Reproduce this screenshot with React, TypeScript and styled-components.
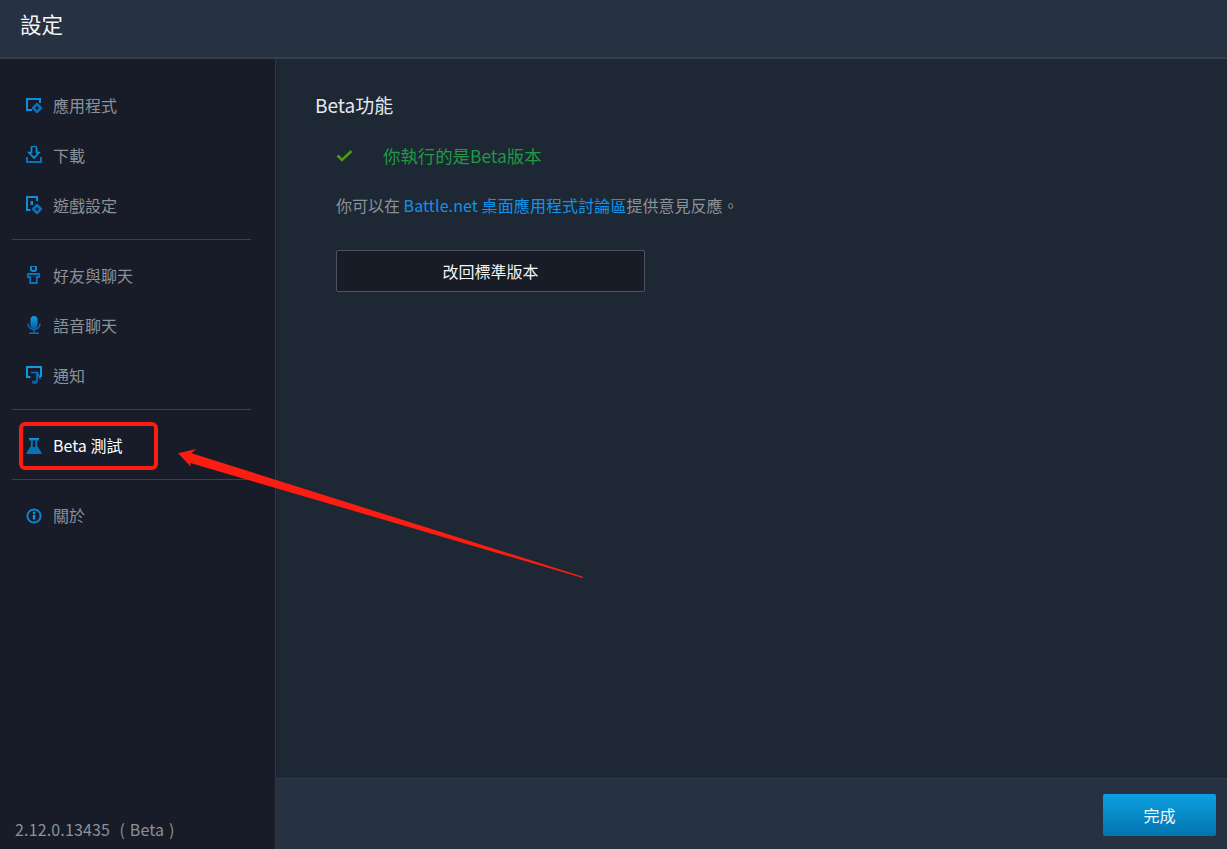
import React from "react";
import styled, { createGlobalStyle } from "styled-components";

const Global = createGlobalStyle`
  html, body { margin: 0; padding: 0; height: 100%; background: #1e2734; overflow: hidden; }
  #root { height: 100%; }
  * { box-sizing: border-box; }
`;

const Shell = styled.div`
  position: relative;
  display: flex;
  flex-direction: column;
  width: 1227px;
  height: 849px;
  font-family: "Noto Sans CJK TC", "Open Sans", sans-serif;
  font-weight: 400;
  overflow: hidden;
`;

const Header = styled.header`
  flex: 0 0 59px;
  display: flex;
  align-items: flex-start;
  padding: 8px 0 0 20px;
  background: #263141;
  border-bottom: 2px solid #333e4e;
`;

const Title = styled.h1`
  margin: 0;
  font-size: 21.5px;
  line-height: 32px;
  font-weight: 400;
  color: #f4f6f8;
`;

const Body = styled.div`
  flex: 1;
  display: flex;
  min-height: 0;
`;

const Sidebar = styled.aside`
  flex: 0 0 276px;
  display: flex;
  flex-direction: column;
  padding: 22px 24px 0 12px;
  background: #171c28;
  border-right: 1px solid #2f3643;
`;

const Group = styled.nav`
  display: flex;
  flex-direction: column;
`;

const Divider = styled.hr`
  width: 239px;
  height: 1px;
  margin: 8px 0 11px;
  border: 0;
  background: #3a404c;
`;

const Row = styled.div<{ $active?: boolean }>`
  display: flex;
  align-items: center;
  height: 50px;
  padding-left: 14px;
  gap: 11px;
  font-size: 16px;
  color: ${(p) => (p.$active ? "#ffffff" : "#8c9198")};
`;

const RowLabel = styled.span`
  padding-bottom: 2px;
`;

const IconBox = styled.span`
  display: flex;
  flex: 0 0 16px;
  width: 16px;
  height: 20px;
`;

const Version = styled.div`
  margin-top: auto;
  padding: 0 0 8px 3px;
  font-size: 16px;
  line-height: 24px;
  letter-spacing: 0.15px;
  word-spacing: 1px;
  color: #8c9198;
  white-space: pre;
`;

const Main = styled.main`
  flex: 1;
  display: flex;
  flex-direction: column;
  min-width: 0;
`;

const Content = styled.section`
  flex: 1;
  padding: 32px 0 0 39px;
  background: #1e2734;
`;

const SectionTitle = styled.h2`
  margin: 0;
  font-size: 19px;
  line-height: 28px;
  font-weight: 400;
  color: #e6e9ec;
`;

const Indented = styled.div`
  display: flex;
  flex-direction: column;
  align-items: flex-start;
  padding-left: 21px;
`;

const Status = styled.div`
  display: flex;
  align-items: center;
  margin-top: 22px;
  height: 28px;
  font-size: 17.4px;
  color: #1f9a45;
`;

const CheckBox = styled.span`
  display: flex;
  width: 47px;
`;

const Note = styled.p`
  margin: 24px 0 0;
  font-size: 16px;
  line-height: 24px;
  color: #8c9198;
`;

const Link = styled.a`
  color: #0e94ea;
  text-decoration: none;
  letter-spacing: 0.1px;
`;

const OutlineButton = styled.button`
  width: 309px;
  height: 42px;
  margin-top: 33px;
  background: #171c27;
  border: 1px solid #4c5361;
  border-radius: 2px;
  color: #f2f4f6;
  font: inherit;
  font-size: 16px;
`;

const Footer = styled.footer`
  flex: 0 0 71px;
  display: flex;
  justify-content: flex-end;
  padding: 15px 11px 0 0;
  background: #263141;
  border-top: 1px solid #2f3a4a;
`;

const PrimaryButton = styled.button`
  width: 113px;
  height: 42px;
  background: linear-gradient(#0f9fe0, #0074ae);
  border: 0;
  border-radius: 2px;
  color: #eef7fc;
  font: inherit;
  font-size: 16px;
`;

const Highlight = styled.div`
  position: absolute;
  left: 19px;
  top: 422px;
  width: 139px;
  height: 48px;
  border: 4px solid #fb1d11;
  border-radius: 6px;
`;

const ArrowLayer = styled.svg`
  position: absolute;
  left: 170px;
  top: 440px;
  pointer-events: none;
`;

const Grad = () => (
  <svg width="0" height="0" style={{ position: "absolute" }}>
    <defs>
      <linearGradient id="ig" x1="0" y1="0" x2="0" y2="1">
        <stop offset="0" stopColor="#10a0e2" />
        <stop offset="1" stopColor="#0a5fa6" />
      </linearGradient>
    </defs>
  </svg>
);

const Svg = ({ children }: { children: React.ReactNode }) => (
  <svg width="16" height="20" viewBox="0 0 16 20">{children}</svg>
);

const Gear = ({ cx, cy }: { cx: number; cy: number }) => (
  <g>
    <circle cx={cx} cy={cy} r="2.9" fill="none" stroke="#0a72bd" strokeWidth="2.4" />
    <path
      d={`M${cx - 1.2} ${cy - 5}h2.4v2h-2.4zM${cx - 1.2} ${cy + 3}h2.4v2h-2.4zM${cx - 5} ${cy - 1.2}h2v2.4h-2zM${cx + 3} ${cy - 1.2}h2v2.4h-2z`}
      fill="#0a72bd"
    />
  </g>
);

const AppIcon = () => (
  <Svg>
    <path d="M6 14H1V3H14V7" fill="none" stroke="#0c8fd6" strokeWidth="2" />
    <Gear cx={11} cy={12} />
  </Svg>
);
const DownloadIcon = () => (
  <Svg>
    <path d="M5.5 2a2.5 2 0 0 1 5 0V6.5H13L8 12 3 6.5H5.5z" fill="none" stroke="#0c8fd6" strokeWidth="1.7" />
    <path d="M1 11V16H15V11" fill="none" stroke="#0a72bd" strokeWidth="2" />
  </Svg>
);
const GameIcon = () => (
  <Svg>
    <path d="M4.5 14H1V1H11V5" fill="none" stroke="#0c8fd6" strokeWidth="2" />
    <path d="M4.5 5h2.5v4H4.5z" fill="#0c8fd6" />
    <Gear cx={11} cy={13} />
  </Svg>
);
const FriendIcon = () => (
  <Svg>
    <circle cx="7.5" cy="2.4" r="2.7" fill="none" stroke="#0f9ade" strokeWidth="1.7" />
    <path d="M2 8h11v3h-2.2v6H4.2v-6H2z" fill="none" stroke="#0a72bd" strokeWidth="1.8" />
  </Svg>
);
const MicIcon = () => (
  <Svg>
    <rect x="4.5" y="0" width="7" height="12.5" rx="3.5" fill="url(#ig)" />
    <path d="M2 7.5c0 4 3 5.8 6 5.8s6-1.8 6-5.8" fill="none" stroke="#0a6db8" strokeWidth="1.6" />
    <path d="M7.2 13h1.6v3.5H7.2zM3 16.5h10V18H3z" fill="#0a6db8" />
  </Svg>
);
const NotifyIcon = () => (
  <Svg>
    <path d="M4.5 11H1V1H15V11" fill="none" stroke="#0f9ade" strokeWidth="2" />
    <path d="M5 6.5H11V16M11 6.5L14.5 13" fill="none" stroke="#0a72bd" strokeWidth="1.7" />
    <ellipse cx="8.5" cy="16.3" rx="2.8" ry="1.7" fill="#0a62a8" />
  </Svg>
);
const FlaskIcon = () => (
  <Svg>
    <path d="M3 2h10v2.4h-1.8V10L15.5 16.5V18H.5v-1.5L4.8 10V4.4H3z" fill="#0a70b8" />
    <path d="M6.8 4.4h2.4V11H6.8z" fill="#171c28" />
    <path d="M3 2h10v1.4H3z" fill="#10a0e2" />
  </Svg>
);
const InfoIcon = () => (
  <Svg>
    <circle cx="8" cy="10" r="6.6" fill="none" stroke="#0c86cf" strokeWidth="2" />
    <path d="M6.8 5.8h2.4v2H6.8zM6.8 8.8h2.4v4.6H6.8z" fill="#1396dd" />
  </Svg>
);

const Item = ({ icon, label, active }: { icon: React.ReactNode; label: string; active?: boolean }) => (
  <Row $active={active}>
    <IconBox>{icon}</IconBox>
    <RowLabel>{label}</RowLabel>
  </Row>
);

export default function App() {
  return (
    <>
      <Global />
      <Grad />
      <Shell>
        <Header>
          <Title>設定</Title>
        </Header>
        <Body>
          <Sidebar>
            <Group>
              <Item icon={<AppIcon />} label="應用程式" />
              <Item icon={<DownloadIcon />} label="下載" />
              <Item icon={<GameIcon />} label="遊戲設定" />
            </Group>
            <Divider />
            <Group>
              <Item icon={<FriendIcon />} label="好友與聊天" />
              <Item icon={<MicIcon />} label="語音聊天" />
              <Item icon={<NotifyIcon />} label="通知" />
            </Group>
            <Divider />
            <Group>
              <Item icon={<FlaskIcon />} label="Beta 測試" active />
            </Group>
            <Divider />
            <Group>
              <Item icon={<InfoIcon />} label="關於" />
            </Group>
            <Version>{"2.12.0.13435  ( Beta )"}</Version>
          </Sidebar>
          <Main>
            <Content>
              <SectionTitle>Beta功能</SectionTitle>
              <Indented>
                <Status>
                  <CheckBox>
                    <svg width="17" height="13" viewBox="0 0 17 13">
                      <path d="M1.5 6.5L6 11L15.5 2" fill="none" stroke="#4f9a12" strokeWidth="2.6" />
                    </svg>
                  </CheckBox>
                  你執行的是Beta版本
                </Status>
                <Note>
                  你可以在 <Link>Battle.net 桌面應用程式討論區</Link>提供意見反應。
                </Note>
                <OutlineButton>改回標準版本</OutlineButton>
              </Indented>
            </Content>
            <Footer>
              <PrimaryButton>完成</PrimaryButton>
            </Footer>
          </Main>
        </Body>
        <Highlight />
        <ArrowLayer width="420" height="145" viewBox="0 0 420 145">
          <path d="M8 13.3L26 9L21.5 13.2L413 136.8L412.8 138L20.3 23L20.8 26.8Z" fill="#fb1d11" />
        </ArrowLayer>
      </Shell>
    </>
  );
}
